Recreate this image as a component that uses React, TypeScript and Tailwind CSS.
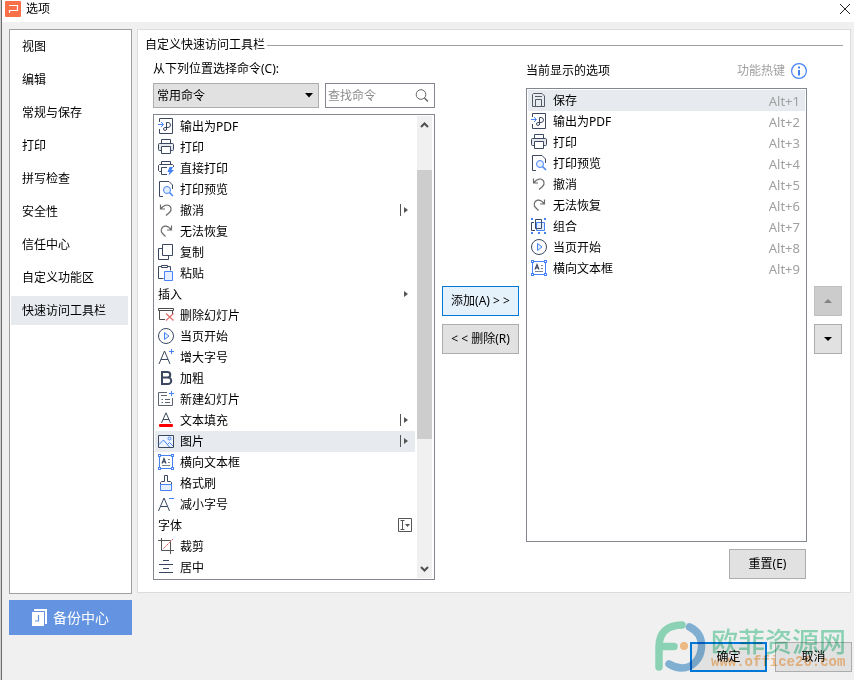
import type { ReactNode } from "react";

const INK = "#3b4860";
const BLUE = "#4583f5";
const GREY = "#6b6b6b";
const PALE = "#e6efff";

const glyphs: Record<string, ReactNode> = {
  save: (
    <g stroke="#555b66">
      <path d="M1.5 14.5v-12l1-1H11L13.5 4v10.5z" />
      <path d="M4.5 14V7.5h6V14M4 4.5h7" />
    </g>
  ),
  pdf: (
    <>
      <path d="M1.5 4V.5h13v15h-13V11" />
      <path d="M8.5 12V4.5H10a2.3 2.3 0 0 1 0 5H6.8a1.5 1.5 0 1 0 1.7 1.5" />
      <path d="M0 6.5h5M3 4l2.5 2.5L3 9" stroke={BLUE} />
    </>
  ),
  print: (
    <>
      <path d="M3.5 4.5v-4h9v4" />
      <rect x="0.5" y="4.5" width="15" height="7" rx="1" fill="#e4e7ec" />
      <path d="M3.5 7.5h9v7h-9z" fill="#fff" />
    </>
  ),
  quickPrint: (
    <>
      <path d="M3.5 4V1.5h9V4" />
      <path d="M3.5 11.5h-2l-1-1v-5l1-1h13l1 1V7" />
      <path d="M9 7.5H3.5v7H9" />
      <path d="M11.5 7H15l-1.500 3H16l-5.500 5.500 1-3.500H9.500z" fill={BLUE} stroke="none" />
    </>
  ),
  preview: (
    <>
      <path d="M5 15.500H1.500V.5H11L14.500 4v4" />
      <circle cx="9" cy="9" r="3.500" stroke={BLUE} fill={PALE} />
      <path d="M11.500 11.500L15 15" stroke={BLUE} strokeWidth="1.500" />
    </>
  ),
  undo: (
    <path d="M2.500 2.500V7H7M2.700 6.800C4.500 4.500 7 2.800 9.500 3c4 .8 4.600 5 2 7.500L8 13.500" stroke={GREY} strokeWidth="1.200" />
  ),
  redo: (
    <path d="M13.500 2.500V7H9M13.300 6.800C11.500 4.500 9 2.700 6.500 3.200 3 4.200 2.300 8 4.500 10.500L7.500 13.500" stroke={GREY} strokeWidth="1.200" />
  ),
  copy: (
    <>
      <path d="M4.500 4.500h-4v11h10v-4" />
      <path d="M4.500.5h10v11h-10z" />
    </>
  ),
  paste: (
    <>
      <path d="M3.500 1.500h-3v12h5M9.500 1.500h3v4" />
      <path d="M3.500.5h6v2h-6z" />
      <path d="M6.500 6.500h8v9h-8z" stroke={BLUE} fill={PALE} />
    </>
  ),
  deleteSlide: (
    <>
      <path d="M.5 1.500h15v2H.5zM1.500 4v8.500H7M14.500 4v3" stroke="#4a4a4a" />
      <path d="M8 6.500l7.500 7M15.500 6.500l-7.500 7" stroke="#e07070" strokeWidth="1.200" />
    </>
  ),
  play: (
    <>
      <circle cx="8" cy="8" r="7.500" />
      <path d="M6.500 4.500v7L11 8z" stroke={BLUE} fill={PALE} />
    </>
  ),
  grow: (
    <>
      <path d="M1 15L6.500 2 12 15M3 10.500h7" />
      <path d="M13.500 0v5M11 2.500h5" stroke={BLUE} />
    </>
  ),
  shrink: (
    <>
      <path d="M.5 15L6 2l5.500 13M2.500 10.500h7" />
      <path d="M11 2.500h5" stroke={BLUE} />
    </>
  ),
  bold: (
    <path d="M4 2h5.500a2.700 2.700 0 0 1 0 5.500H4zM4 7.500h6a3 3 0 0 1 0 6.500H4z" strokeWidth="2" />
  ),
  newSlide: (
    <g stroke="#5b6472">
      <path d="M9 1.500H.5v13h14V7M3 4.500h6M7 8.500h5M7 11.500h5M3.500 8.500H5M3.500 11.500H5" />
      <path d="M13.500 0v5M11 2.500h5" stroke={BLUE} />
    </g>
  ),
  textFill: (
    <>
      <path d="M3.500 11L8 .8 12.500 11M5 7.500h6" />
      <rect x="1" y="12" width="14" height="3" rx="1" fill="#f00" stroke="none" />
    </>
  ),
  image: (
    <>
      <path d="M.5 2.500h15v12H.5z" fill="#eef4ff" />
      <path d="M1 11.500l4.500-4.500 6 7M9.500 11.500l2-2 3.500 3.500" stroke={BLUE} />
      <circle cx="11.500" cy="5.500" r="1.500" stroke={BLUE} />
    </>
  ),
  textBox: (
    <>
      <path d="M1.500 1.500h13v13h-13z" stroke={BLUE} />
      <path d="M0 0h3v3H0zM13 0h3v3h-3zM0 13h3v3H0zM13 13h3v3h-3z" fill={BLUE} stroke="none" />
      <path d="M1 1h1v1H1zM14 1h1v1h-1zM1 14h1v1H1zM14 14h1v1h-1z" fill="#fff" stroke="none" />
      <path d="M4 9.500l2-5 2 5M5 7.800h2" strokeWidth="1.200" />
      <path d="M10 5.500h2M10 8.500h2M4 11.500h8" stroke="#7b8494" />
    </>
  ),
  brush: (
    <>
      <path d="M2.500 9.500v-2l1-1h3v-6h3v6h3l1 1v2" />
      <path d="M2.500 9.500h11v6h-11z" stroke={BLUE} fill={PALE} />
    </>
  ),
  crop: (
    <g stroke="#555">
      <path d="M3.500 0v12.500H16M0 2.500h12.500V16" />
      <path d="M5.500 10.500L15 1" stroke="#d96060" strokeDasharray="3 1" />
    </g>
  ),
  center: <path d="M5 1.500h6M1 5.500h14M5 9.500h6M1 13.500h14" />,
  group: (
    <>
      <path d="M5.500 4.500h8v8h-8z" fill={PALE} stroke={BLUE} />
      <path d="M3 4.500H.5v8H4M4.500 10.500v-9h6v9z" />
      <path d="M0 0h2v2H0zM13 0h2v2h-2zM0 14h2v2H0zM13 14h2v2h-2zM7 14h2v2H7z" fill={BLUE} stroke="none" />
    </>
  ),
};

function Icon({ name }: { name: string }) {
  return (
    <svg width="16" height="16" viewBox="0 0 16 16" fill="none" stroke={INK} className="mb-px shrink-0" aria-hidden="true">
      {glyphs[name]}
    </svg>
  );
}

type Command = { label: string; icon?: string; mark?: "split" | "menu" | "combo"; selected?: boolean };

const commands: Command[] = [
  { label: "输出为PDF", icon: "pdf" },
  { label: "打印", icon: "print" },
  { label: "直接打印", icon: "quickPrint" },
  { label: "打印预览", icon: "preview" },
  { label: "撤消", icon: "undo", mark: "split" },
  { label: "无法恢复", icon: "redo" },
  { label: "复制", icon: "copy" },
  { label: "粘贴", icon: "paste" },
  { label: "插入", mark: "menu" },
  { label: "删除幻灯片", icon: "deleteSlide" },
  { label: "当页开始", icon: "play" },
  { label: "增大字号", icon: "grow" },
  { label: "加粗", icon: "bold" },
  { label: "新建幻灯片", icon: "newSlide" },
  { label: "文本填充", icon: "textFill", mark: "split" },
  { label: "图片", icon: "image", mark: "split", selected: true },
  { label: "横向文本框", icon: "textBox" },
  { label: "格式刷", icon: "brush" },
  { label: "减小字号", icon: "shrink" },
  { label: "字体", mark: "combo" },
  { label: "裁剪", icon: "crop" },
  { label: "居中", icon: "center" },
];

const current = [
  { label: "保存", icon: "save" },
  { label: "输出为PDF", icon: "pdf" },
  { label: "打印", icon: "print" },
  { label: "打印预览", icon: "preview" },
  { label: "撤消", icon: "undo" },
  { label: "无法恢复", icon: "redo" },
  { label: "组合", icon: "group" },
  { label: "当页开始", icon: "play" },
  { label: "横向文本框", icon: "textBox" },
];

const sections = ["视图", "编辑", "常规与保存", "打印", "拼写检查", "安全性", "信任中心", "自定义功能区", "快速访问工具栏"];

function Mark({ kind }: { kind: "split" | "menu" | "combo" }) {
  return (
    <svg width="16" height="16" viewBox="0 0 16 16" fill="none" stroke="#555" className="mb-px ml-auto shrink-0" aria-hidden="true">
      {kind === "split" && <path d="M3.500 2v12" />}
      {kind !== "combo" && <path d="M7 5v6l4-3z" fill="#555" stroke="none" />}
      {kind === "combo" && (
        <>
          <path d="M1.500 1.500h13v13h-13z" />
          <path d="M3.500 3.500h4M5.500 4v8M3.500 12.500h4" />
          <path d="M8 7h5l-2.500 3z" fill="#555" stroke="none" />
        </>
      )}
    </svg>
  );
}

const tones = {
  plain: "border border-[#adadad] bg-[#e1e1e1]",
  hot: "border border-[#0078d7] bg-[#e5f1fb]",
  primary: "border-2 border-[#0078d7] bg-[#e1e1e1]",
};

function PushButton({ children, tone = "plain", className = "" }: { children: ReactNode; tone?: keyof typeof tones; className?: string }) {
  return (
    <button type="button" className={`h-[30px] w-[77px] whitespace-nowrap text-center ${tones[tone]} ${className}`}>
      {children}
    </button>
  );
}

export default function App() {
  return (
    <div className="min-h-screen border-l border-[#d0d0d0] bg-[#f0f0f0] font-['Noto_Sans','Noto_Sans_CJK_SC',sans-serif] text-xs leading-[18px] text-black">
      <div className="relative flex min-h-screen flex-col border-l border-[#6b6b6b]">
        <header className="flex h-[22px] items-start justify-between bg-white pl-[3px]">
          <div className="flex items-center gap-[5px]">
            <svg width="16" height="18" viewBox="0 0 16 18" aria-hidden="true">
              <rect y="1" width="16" height="16" rx="1" fill="#fa7048" />
              <path d="M4 5.500h8.500v5H4.500V13" fill="none" stroke="#fff" strokeWidth="1.200" />
            </svg>
            <h1>选项</h1>
          </div>
          <button type="button" aria-label="关闭" className="mr-1 mt-1 size-2.5">
            <svg width="10" height="10" viewBox="0 0 10 10" stroke="#222" aria-hidden="true">
              <path d="M0 0l10 10M10 0L0 10" />
            </svg>
          </button>
        </header>

        <div className="flex items-start gap-[5px] pl-[7px] pr-[3px] pt-[7px]">
          <div className="flex w-[123px] shrink-0 flex-col gap-1.5">
            <nav className="flex h-[565px] flex-col gap-1 border border-[#a0a0a0] bg-white pl-px pr-[3px] pt-0.5">
              {sections.map((s) => (
                <button
                  key={s}
                  type="button"
                  className={`h-[29px] shrink-0 pl-[11px] text-left ${s === "快速访问工具栏" ? "bg-[#e7eaef]" : ""}`}
                >
                  {s}
                </button>
              ))}
            </nav>
            <button type="button" className="flex h-[35px] items-center justify-center gap-[5px] bg-[#6493e1] text-sm text-white">
              <svg width="16" height="18" viewBox="0 0 16 18" aria-hidden="true">
                <path d="M2 0h13v15h-2V2H2z" fill="#fff" />
                <path d="M0 3h12v14H0z" fill="#fff" />
                <path d="M6.500 6v6H3" fill="none" stroke="#6493e1" strokeWidth="1.200" />
              </svg>
              备份中心
            </button>
          </div>

          <main className="min-w-0 flex-1 border border-[#dcdcdc] bg-white px-[7px] pb-3 pt-1.5">
            <fieldset className="border-t border-[#a0a0a0]">
              <legend className="pr-0.5">自定义快速访问工具栏</legend>
              <div className="flex gap-[7px] pl-2 pr-px pt-1.5">
                <section className="w-[282px] shrink-0">
                  <label htmlFor="source" className="block">
                    从下列位置选择命令(C):
                  </label>
                  <div className="mt-[5px] flex gap-1.5">
                    <div className="relative w-[166px]">
                      <select id="source" className="h-[25px] w-full appearance-none border border-[#adadad] bg-[#e1e1e1] pl-[3px]">
                        <option>常用命令</option>
                      </select>
                      <svg width="8" height="5" viewBox="0 0 8 5" className="pointer-events-none absolute right-1.5 top-2.5" aria-hidden="true">
                        <path d="M0 0h8L4 4.500z" />
                      </svg>
                    </div>
                    <div className="relative flex-1">
                      <input
                        type="text"
                        aria-label="查找命令"
                        placeholder="查找命令"
                        className="h-[25px] w-full border border-[#828790] bg-white pl-0.5 placeholder:text-[#8c8c8c]"
                      />
                      <svg width="14" height="14" viewBox="0 0 14 14" fill="none" stroke="#666" className="pointer-events-none absolute right-1.5 top-1.5" aria-hidden="true">
                        <circle cx="6" cy="5.500" r="4.800" />
                        <path d="M9.500 9l3.500 3.500" strokeWidth="1.500" />
                      </svg>
                    </div>
                  </div>
                  <div className="mt-1.5 flex border border-[#828790] p-px pr-0.5">
                    <ul role="listbox" aria-label="可选命令" className="flex-1">
                      {commands.map((c) => (
                        <li
                          key={c.label}
                          role="option"
                          aria-selected={!!c.selected}
                          className={`flex h-[21px] items-center gap-1.5 pl-[3px] pr-0.5 ${c.selected ? "bg-[#e7eaef]" : ""}`}
                        >
                          {c.icon && <Icon name={c.icon} />}
                          <span>{c.label}</span>
                          {c.mark && <Mark kind={c.mark} />}
                        </li>
                      ))}
                    </ul>
                    <div className="ml-0.5 flex w-[15px] flex-col items-center bg-[#f0f0f0]" aria-hidden="true">
                      <svg width="9" height="6" viewBox="0 0 9 6" fill="none" stroke="#505050" strokeWidth="2" className="mt-1.5">
                        <path d="M1 5l3.500-3.500L8 5" />
                      </svg>
                      <div className="mt-[42px] h-[269px] w-full bg-[#cdcdcd]" />
                      <svg width="9" height="6" viewBox="0 0 9 6" fill="none" stroke="#505050" strokeWidth="2" className="mb-1.5 mt-auto">
                        <path d="M1 1l3.500 3.500L8 1" />
                      </svg>
                    </div>
                  </div>
                </section>

                <div className="flex w-[77px] shrink-0 flex-col gap-2 pt-[226px]">
                  <PushButton tone="hot">添加(A) &gt; &gt;</PushButton>
                  <PushButton>&lt; &lt; 删除(R)</PushButton>
                </div>

                <section className="flex min-w-0 flex-1 flex-col">
                  <div className="flex h-[22px] items-center justify-between">
                    <h2>当前显示的选项</h2>
                    <div className="flex items-center gap-1.5 text-[#a0a0a0]">
                      <span>功能热键</span>
                      <svg width="16" height="16" viewBox="0 0 16 16" fill="none" stroke={BLUE} aria-hidden="true">
                        <circle cx="8" cy="8" r="7.400" strokeWidth="1.200" />
                        <path d="M8 3.500v2M8 7v5.500" strokeWidth="2" />
                      </svg>
                    </div>
                  </div>
                  <ul role="listbox" aria-label="当前显示的选项" className="mt-1.5 h-[454px] border border-[#828790] p-px">
                    {current.map((c, i) => (
                      <li
                        key={c.label}
                        role="option"
                        aria-selected={i === 0}
                        className={`flex h-[21px] items-center gap-1.5 pl-[3px] pr-[5px] ${i === 0 ? "bg-[#e7eaef]" : ""}`}
                      >
                        <Icon name={c.icon} />
                        <span>{c.label}</span>
                        <span className="ml-auto text-[13px] text-[#a0a0a0]">Alt+{i + 1}</span>
                      </li>
                    ))}
                  </ul>
                  <PushButton className="mr-px mt-[7px] self-end">重置(E)</PushButton>
                </section>

                <div className="flex w-7 shrink-0 flex-col gap-2 pt-[226px]">
                  <button type="button" disabled aria-label="上移" className="flex h-[30px] items-center justify-center border border-[#bfbfbf] bg-[#cccccc]">
                    <svg width="8" height="4" viewBox="0 0 8 4" fill="#838383" aria-hidden="true">
                      <path d="M0 4h8L4 0z" />
                    </svg>
                  </button>
                  <button type="button" aria-label="下移" className="flex h-[30px] items-center justify-center border border-[#adadad] bg-[#e1e1e1]">
                    <svg width="8" height="4" viewBox="0 0 8 4" aria-hidden="true">
                      <path d="M0 0h8L4 4z" />
                    </svg>
                  </button>
                </div>
              </div>
            </fieldset>
          </main>
        </div>

        <footer className="flex justify-end gap-2 pb-2 pr-0.5 pt-[7px]">
          <PushButton tone="primary">确定</PushButton>
          <PushButton>取消</PushButton>
        </footer>

        <div className="pointer-events-none absolute right-2 top-[621px] flex gap-[5px] mix-blend-multiply" aria-hidden="true">
          <svg width="51" height="51" viewBox="0 0 51 51" fill="none" strokeLinecap="round">
            <path d="M27 4C12 4 4 12 4 26v20M4 25.500h15" stroke="#94dfc0" strokeWidth="7.500" />
            <path d="M34.500 6C43 10 47 17 46.500 26 46 38 37 47 27 47c-5 0-9-1.500-13-4" stroke="#88bae0" strokeWidth="7.500" />
            <circle cx="29" cy="25" r="4" fill="#fcc58c" />
          </svg>
          <div className="whitespace-nowrap pt-1">
            <div className="text-[27px] font-medium leading-[34px] text-[#94dfc0]">欧菲资源网</div>
            <div className="font-['Liberation_Mono',monospace] text-sm font-bold leading-[6px] text-[#fcc58c]">www.office26.com</div>
          </div>
        </div>
      </div>
    </div>
  );
}
